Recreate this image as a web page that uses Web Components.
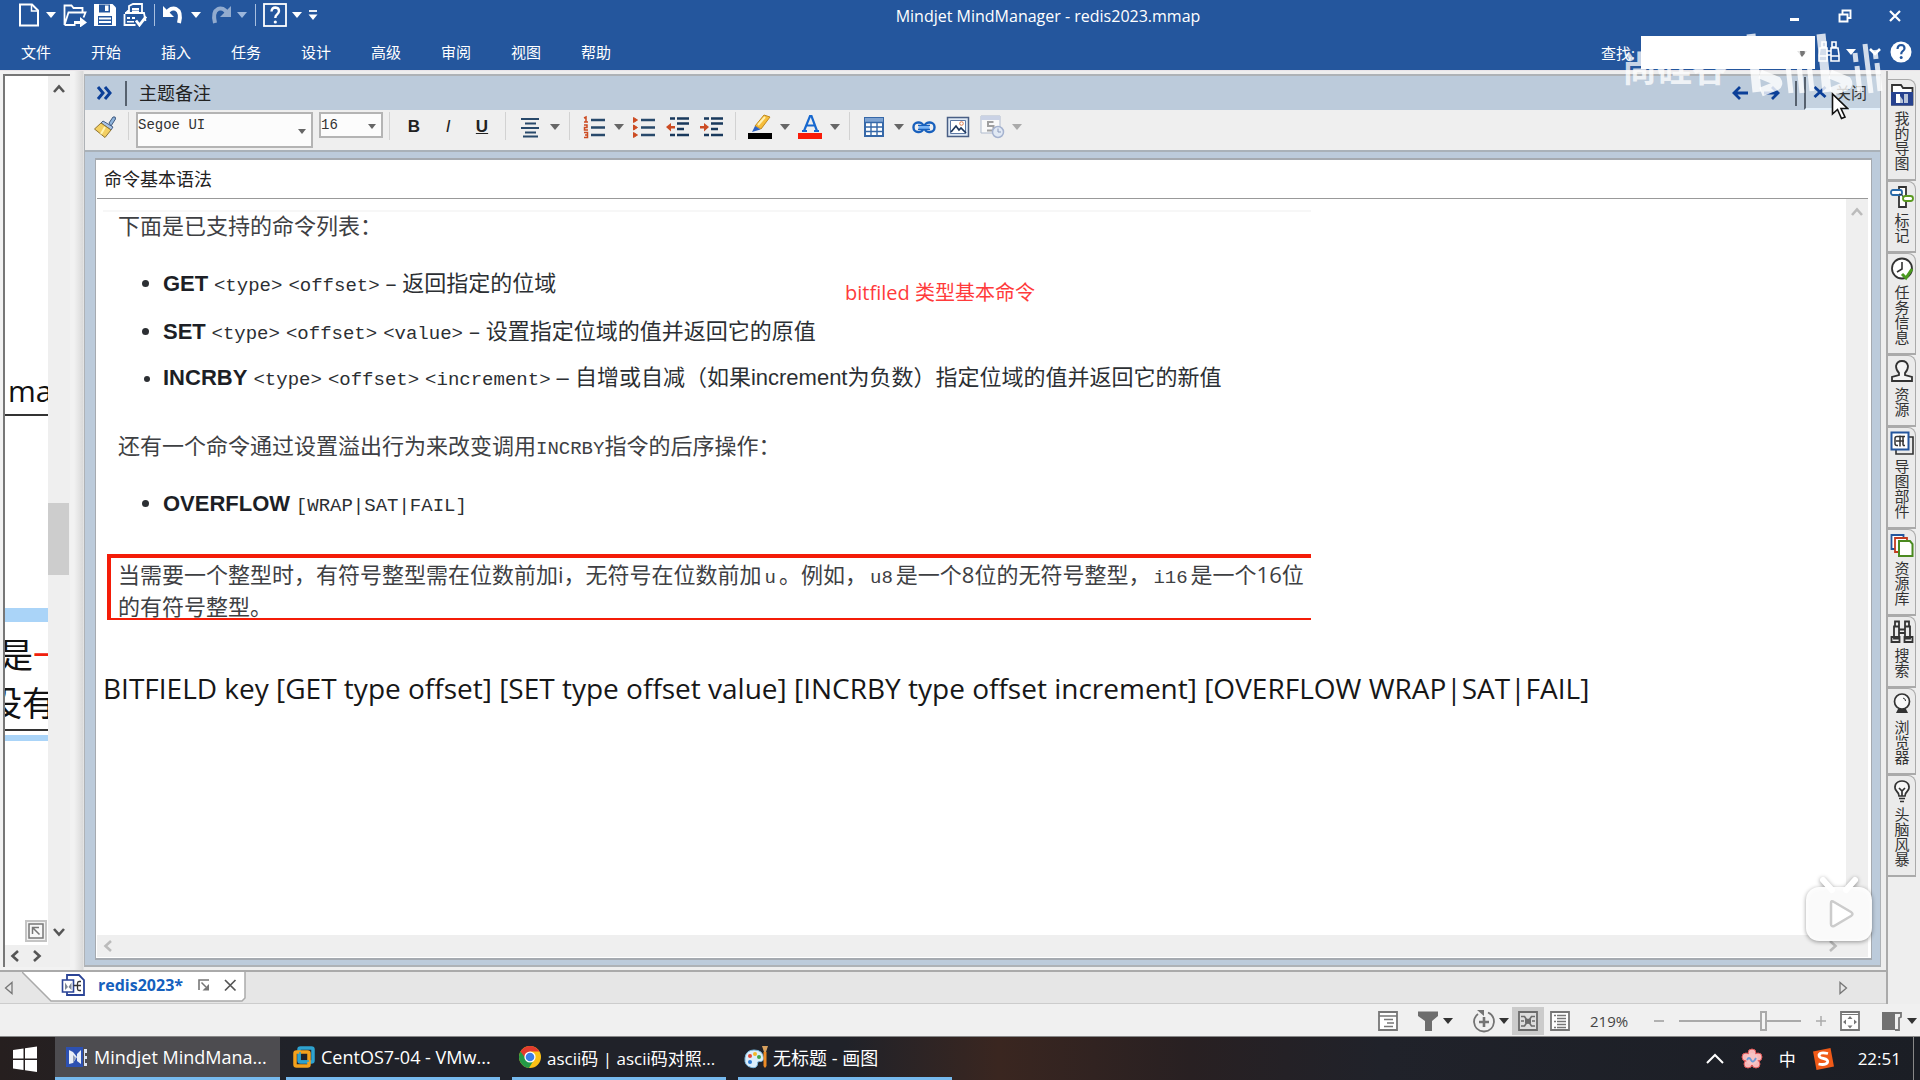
<!DOCTYPE html>
<html lang="zh-CN">
<head>
<meta charset="utf-8">
<title>Mindjet MindManager - redis2023.mmap</title>
<style>
  html, body { margin: 0; height: 100%; overflow: hidden; }
  body { font-family: "Open Sans", "Noto Sans CJK SC", sans-serif; font-size: 15px; color: #222; }
</style>
</head>
<body>
<mm-app></mm-app>
<script>
const ICONS = {
  newdoc: [24, '<path d="M3 1.5h12l6 6v15H3z" fill="none" stroke="#fff" stroke-width="2"/><path d="M14.5 1.5v6.500h6.500" fill="none" stroke="#fff" stroke-width="1.500"/>'],
  open: [24, '<path d="M1.500 22V2.500h7l2 2.500h9v4M1.500 22l4-12.500h17l-2 5M1.500 22h11" fill="none" stroke="#fff" stroke-width="1.800"/><path d="M11 18h6v-4l7 5.500-7 5v-3.500h-6z" fill="#fff"/>'],
  save: [24, '<path d="M1 1h18.500L23 4.500V23H1z" fill="#fff"/><path d="M6 1.500h11v8H6z" fill="#24569d"/><path d="M12 2.500h3.500v5.500H12z" fill="#fff"/><path d="M5 13h14v9H5z" fill="#24569d"/><path d="M6 15.500h12M6 19h12" stroke="#fff" stroke-width="2"/>'],
  print: [24, '<path d="M6 10V3l4-2h9v9M2 10h19l1.500 8M1.500 11v11h11M3 10l3-3M9 6h7M9 8.500h7" fill="none" stroke="#fff" stroke-width="1.800"/><path d="M4 14h3v2H4zM9 14h3v2H9zM4 18h7v1.500H4z" fill="#fff"/><path d="M13 17.500l3.500 4.500L23 13.500" fill="none" stroke="#fff" stroke-width="2.800"/>'],
  undo: [24, '<path d="M1 3v11h11z" fill="#fff"/><path d="M5 10C9 2 21 4 17 20" fill="none" stroke="#fff" stroke-width="4"/>'],
  redo: [24, '<g opacity=".5"><path d="M23 3v11H12z" fill="#fff"/><path d="M19 10C15 2 3 4 7 20" fill="none" stroke="#fff" stroke-width="4"/></g>'],
  helpbox: [24, '<rect x="1" y="1" width="22" height="22" fill="none" stroke="#fff" stroke-width="1.800"/><path d="M8.500 8.500q.3-4 4-4 3.500.2 3.500 3.500 0 2-2 3.500-1.700 1.200-1.700 3.500" fill="none" stroke="#fff" stroke-width="2.400"/><circle cx="12.300" cy="19" r="1.600" fill="#fff"/>'],
  custom: [12, '<path d="M2 2h8" stroke="#fff" stroke-width="1.800"/><path d="M1.500 5.500h9L6 11z" fill="#fff"/>'],
  min: [16, '<path d="M3 11.500h9" stroke="#fff" stroke-width="3"/>'],
  restore: [16, '<path d="M5.500 6V2.500h8V10H10M2.500 6.500h8v7h-8z" fill="none" stroke="#fff" stroke-width="1.900"/>'],
  close: [16, '<path d="M3 3l10 10M13 3L3 13" stroke="#fff" stroke-width="2.200"/>'],
  binw: [24, '<g fill="none" stroke="#fff" stroke-width="1.600"><path d="M5 2h4v5H5zM15 2h4v5h-4zM3 8h7v13H2v-6zM14 8h7l1 7v6h-8zM10 11h4M10 15h4M2 16h8M14 16h8"/></g>'],
  bin: [24, '<g fill="none" stroke="#333" stroke-width="1.800"><path d="M5 1.500h4v5H5zM15 1.500h4v5h-4zM4 6.500h5v12H4zM15 6.500h5v12h-5zM9 9.500h6M9 13h6M1.500 17h8v5h-8zM14.500 17h8v5h-8z"/></g>'],
  helpc: [24, '<circle cx="12" cy="12" r="10.500" fill="#fff"/><path d="M8.500 9q.3-4 3.700-4 3.300.2 3.300 3.200 0 1.800-1.800 3-1.500 1-1.500 3" fill="none" stroke="#24569d" stroke-width="2.200"/><circle cx="12.200" cy="17.500" r="1.500" fill="#24569d"/>'],
  chev: [16, '<path d="M3 5l5 5 5-5" fill="none" stroke="#fff" stroke-width="2.600"/>'],
  expand: [18, '<path d="M3 3l5 6-5 6M10 3l5 6-5 6" fill="none" stroke="#0b3f98" stroke-width="3"/>'],
  left: [18, '<path d="M17 9H3M9 3L3 9l6 6" fill="none" stroke="#0b3f98" stroke-width="2.800"/>'],
  right: [18, '<path d="M1 9h14M9 3l6 6-6 6" fill="none" stroke="#0b3f98" stroke-width="2.800"/>'],
  xblue: [16, '<path d="M2.500 3l11 10M13.500 3l-11 10" stroke="#0b3f98" stroke-width="2.900"/>'],
  brush: [24, '<path d="M16 8l4-6q3-1 2.500 2L18 11z" fill="#8eb4dc" stroke="#405a80"/><path d="M10 6l10 6-2 3L8 8z" fill="#a9c3e6" stroke="#465f86"/><path d="M8 8l10 7-6 7.500L1.500 14z" fill="#f3cf62" stroke="#8f7430"/><path d="M12 12l-4 7" stroke="#fff3b0" stroke-width="2"/>'],
  align: [24, '<path d="M3 4h18M7 8.500h11M3 13h18M7 17.500h11M5 21.500h15" stroke="#28496b" stroke-width="2.100"/>'],
  numlist: [24, '<path d="M9 5h14M9 12.500h14M9 20h14" stroke="#28496b" stroke-width="2.600"/><path d="M2 3l2-1v5M2 7h4M2 10h3v2.500H2.500V15H6M2 17.500h3.500v5H2M3 20h2" fill="none" stroke="#cc4b22" stroke-width="1.500"/>'],
  bullist: [24, '<path d="M9 5h14M9 12.500h14M9 20h14" stroke="#28496b" stroke-width="2.600"/><path d="M1.500 2.500l4 2.500-4 2.500zM1.500 10l4 2.500-4 2.500zM1.500 17.500l4 2.500-4 2.500z" fill="#cc4b22" stroke="#cc4b22"/>'],
  outdent: [24, '<path d="M4 3.500h5M11 3.500h12M11 8.500h12M11 14h7M4 20h5M11 20h12" stroke="#19395c" stroke-width="2.400"/><path d="M0 12l5-4v3h4v2.500H5v3z" fill="#cc4b22"/>'],
  indent: [24, '<path d="M4 3.500h5M11 3.500h12M11 8.500h12M11 14h7M4 20h5M11 20h12" stroke="#19395c" stroke-width="2.400"/><path d="M9 12L4 8v3H0v2.500h4v3z" fill="#cc4b22"/>'],
  highlight: [26, '<path d="M8 12L17 1l6 2-9 12z" fill="#f6bd3a" stroke="#c08a20"/><path d="M11 11l7-8" stroke="#fff0b0" stroke-width="2"/><path d="M8 12l5.500 3.500L5 18z" fill="#2b62c4"/><path d="M1 19h24v6H1z"/>'],
  fontcol: [26, '<path d="M7 17L13 2h1.500L20 17M9.500 11.500h8M5 17h5M17 17h5" fill="none" stroke="#1768cf" stroke-width="2.200"/><path d="M1 19h24v6H1z" fill="#f81b09"/>'],
  table: [22, '<path d="M2 2h18v18H2z" fill="#fff" stroke="#3668a8" stroke-width="2"/><path d="M2 2h18v4H2z" fill="#7ea3d2"/><path d="M2 6.500h18M2 11h18M2 15.500h18M8 6v14M14 6v14" stroke="#3668a8" stroke-width="1.400"/>'],
  link: [24, '<g fill="none" stroke="#1860bd" stroke-width="2.400"><rect x="1.500" y="7.500" width="10" height="9.500" rx="4.500"/><rect x="12.500" y="7.500" width="10" height="9.500" rx="4.500"/></g><path d="M6.500 12.300h11" stroke="#78b3f5" stroke-width="3.600"/><path d="M6 10.300h12M6 14.300h12" stroke="#1860bd" stroke-width="1.300"/>'],
  image: [24, '<path d="M1.500 2.500h21v19h-21z" fill="#dfe9f5" stroke="#4a5f85" stroke-width="1.500"/><path d="M4.500 5.500h15v13h-15z" fill="#fff" stroke="#5d79a5"/><path d="M5 17l5-6 3 4 2-2 5 5" fill="none" stroke="#1b355c" stroke-width="1.700"/><circle cx="15.500" cy="8.500" r="1.800" fill="#fff" stroke="#df7b4a"/>'],
  datetime: [26, '<g opacity=".65"><path d="M2 2h19v17H2z" fill="#fff" stroke="#8fa0bd"/><path d="M2 2h19v4H2z" fill="#b7c4e0"/><path d="M14.500 8H9v4h5.500v4.500H8" fill="none" stroke="#777" stroke-width="2"/><circle cx="19" cy="18" r="5.500" fill="#dbe6f8" stroke="#7e93be" stroke-width="1.500"/><path d="M19 14.500V18h3" fill="none" stroke="#566f9e"/></g>'],
  mymaps: [24, '<path d="M2 21.500V2h9l2 3h9.500v16.500z" fill="#fff" stroke="#333" stroke-width="1.800"/><path d="M1 9h22v13.500H1z" fill="#27428f"/><path d="M6 11h4v9H6z" fill="#fff"/><path d="M10 13l3 4v3h-3zM14 11h4v9h-4z" fill="#b9c4d8"/>'],
  marker: [24, '<path d="M9 2h7v20H9z" fill="#fff" stroke="#333" stroke-width="1.800"/><rect x="1" y="5" width="11" height="5" rx="2" fill="#fff" stroke="#2869a8" stroke-width="1.800"/><path d="M9 9q4 0 4 3" fill="none" stroke="#333"/><rect x="13" y="11" width="10" height="5" rx="2.500" fill="#fff" stroke="#5a9a20" stroke-width="1.800"/>'],
  task: [24, '<circle cx="12" cy="11.500" r="10" fill="#fff" stroke="#333" stroke-width="1.800"/><path d="M12 5v7l-5 3" fill="none" stroke="#333" stroke-width="1.600"/><path d="M12 17l4 4 6-9" fill="none" stroke="#4b9a20" stroke-width="3"/>'],
  person: [24, '<path d="M9 14q-3-3-3-7 1-5 6-5t6 5q0 4-3 7v2l7 2v4H2v-4l7-2z" fill="#f5f5f5" stroke="#333" stroke-width="1.800"/>'],
  parts: [24, '<path d="M19 6h4v17H6v-4" fill="none" stroke="#333" stroke-width="1.600"/><path d="M1.500 1.500h17v17h-17z" fill="#fff" stroke="#24569d" stroke-width="2"/><path d="M10 4.500v11M13 5.500H7q-2 0-2 2v5q0 2 2 2h1M13 14.500h2M6 10h8M13 5.500h2M13 5.500v9" fill="none" stroke="#333" stroke-width="1.500"/>'],
  library: [24, '<path d="M1.500 2h12v14h-12z" fill="#fff" stroke="#24569d" stroke-width="1.800"/><path d="M5 5h12v14H5z" fill="#fff" stroke="#c33c20" stroke-width="1.800"/><path d="M9 8h11l2.500 3v12H9z" fill="#fff" stroke="#4b8a20" stroke-width="2"/>'],
  globe: [24, '<circle cx="12" cy="9.500" r="7.500" fill="#f8f8f8" stroke="#333" stroke-width="1.700"/><path d="M13 6q3 1 2.500 3" fill="none" stroke="#333"/><path d="M8 17h8l2 4H6z" fill="#333"/>'],
  bulb: [24, '<path d="M9 17q-.3-3-2.500-5Q4 9 5.500 5.500 7.500 2 12 2t6.500 3.500Q20 9 17.500 12q-2.200 2-2.500 5z" fill="#f8f8f8" stroke="#333" stroke-width="1.700"/><path d="M9 9l3 3 3-3M12 11v6M9 19.500h6M10 22.500h4" fill="none" stroke="#333" stroke-width="1.700"/>'],
  mmdoc: [24, '<path d="M6 2h12l5 5v15H6z" fill="#fff" stroke="#2b4496" stroke-width="1.800"/><path d="M1.500 7h11v12h-11z" fill="#fff" stroke="#2b4496" stroke-width="1.600"/><path d="M4 9.500l3 4.500-3 3zM10.500 9.500L7.500 14l3 3z" fill="#7d8795"/><path d="M12.500 12.500h4M20 8.500h-2q-1.500 0-1.500 2v5q0 2 1.500 2h2M17 12.500h3" fill="none" stroke="#333" stroke-width="1.300"/>'],
  pin: [14, '<path d="M2 12V2h10" fill="none" stroke="#777" stroke-width="1.600"/><path d="M4.500 4.500L9 9" stroke="#777" stroke-width="1.500"/><path d="M12 6v6.500H5.500z" fill="#777"/>'],
  xgray: [14, '<path d="M2 2l10.500 10.500M12.500 2L2 12.500" stroke="#555" stroke-width="1.700"/>'],
  corner: [22, '<path d="M1 1h20v20H1z" fill="#f2f2f2" stroke="#c4c4c4" stroke-width="2"/><path d="M4 4h14v14H4z" fill="#f8f8f8" stroke="#777" stroke-width="1.500"/><path d="M7.500 14V7.500H14M8 8l6.500 6.500" fill="none" stroke="#777" stroke-width="1.500"/>'],
  tril: [14, '<path d="M11 1.500v11L4.500 7z" fill="none" stroke="#777" stroke-width="1.300"/>'],
  trir: [14, '<path d="M4 1.500v11L10.500 7z" fill="none" stroke="#777" stroke-width="1.300"/>'],
  cup: [14, '<path d="M2 10l5-5.500 5 5.500" fill="none" stroke="currentColor" stroke-width="2.600"/>'],
  cdown: [14, '<path d="M2 4l5 5.500L12 4" fill="none" stroke="currentColor" stroke-width="2.600"/>'],
  cleft: [14, '<path d="M10 2L4.500 7l5.500 5" fill="none" stroke="currentColor" stroke-width="2.600"/>'],
  cright: [14, '<path d="M4 2l5.500 5L4 12" fill="none" stroke="currentColor" stroke-width="2.600"/>'],
  note: [22, '<path d="M2 2h18v18H2z" fill="#fff" stroke="#777" stroke-width="1.800"/><path d="M2 6h18M7 9.500h9M10 13h7M7 16.500h9" stroke="#777" stroke-width="1.600"/>'],
  filter: [22, '<path d="M1 1.500h20V6l-6 5v10H8V11L1 6z" fill="#6d6d6d"/>'],
  addcircle: [24, '<path d="M6 5q-4 3-4 8 1 9 10 9.500 9-.5 10-9.500 0-7-6-9.500" fill="none" stroke="#737373" stroke-width="1.800"/><path d="M12 8v10M7 13h10" stroke="#737373" stroke-width="2.600"/><path d="M5 1h7v6z" fill="#737373"/>'],
  mapview: [22, '<path d="M2 2h18v18H2z" fill="#ddd" stroke="#6b6b6b" stroke-width="1.800"/><path d="M4 6.500h3.500l2 3h3l2-3H18M4 16h3.500l2-3h3l2 3H18M4 11h3M15 11h3" fill="none" stroke="#6b6b6b" stroke-width="1.600"/><path d="M8 9h6v4.500H8z" fill="#6b6b6b"/>'],
  outline: [22, '<path d="M2 2h18v18H2z" fill="#fff" stroke="#777" stroke-width="1.800"/><path d="M5 5.500h2M8 5.500h9M8 8.500h9M8 11.500h9M5 11.500h2M8 14.500h9M8 17.500h9M5 17.500h2" stroke="#777" stroke-width="1.400"/>'],
  fit: [22, '<path d="M2 2h18v18H2z" fill="#fff" stroke="#777" stroke-width="1.800"/><path d="M2 4.500h18" stroke="#777"/><path d="M11 6l2.500 3h-5zM11 18.500l2.500-3h-5zM4 12l3-2.500v5zM18 12l-3-2.500v5z" fill="#777"/>'],
  pane: [22, '<path d="M1 2h13v18H1z" fill="#717171"/><path d="M14 3h6v4l-2 1v12h-4" fill="none" stroke="#777" stroke-width="1.800"/>'],
  plus: [14, '<path d="M7 2v10M2 7h10" stroke="#aaa" stroke-width="1.500"/>'],
  minus: [14, '<path d="M2 7h10" stroke="#aaa" stroke-width="1.800"/>'],
  windows: [26, '<path d="M1 4l10.500-1.500v10H1zM13 2.300L25 .5v12H13zM1 14h10.500v10L1 22.500zM13 14h12v12l-12-1.800z" fill="#fff"/>'],
  mm: [24, '<path d="M1 2h17v20H1z" fill="#2d51b2"/><path d="M4 5l4 2 4 5-4 6-4 1zM16 5v14l-4-3V9z" fill="#e8edf6"/><path d="M8 10l3 3-3 5z" fill="#8d9bb8"/><path d="M19 4h3v4h-2v3h2v3h-2v4h2v3h-3z" fill="#dfe5f3"/>'],
  vm: [24, '<rect x="7" y="3" width="14" height="14" rx="1.500" fill="none" stroke="#2ea2cf" stroke-width="3.500"/><rect x="3" y="7" width="14" height="14" rx="1.500" fill="none" stroke="#f5a21c" stroke-width="3.500"/><path d="M8 7v9h9" fill="none" stroke="#2ea2cf" stroke-width="1.500"/>'],
  chrome: [24, '<circle cx="12" cy="12" r="11" fill="#fbc116"/><path d="M2.500 6.500A11 11 0 0 0 11 23l5.500-9L12 12z" fill="#249a47"/><path d="M2.500 6.500A11 11 0 0 1 21.500 6.500H12L8 14z" fill="#e33b2e"/><circle cx="12" cy="12" r="5.600" fill="#fff"/><circle cx="12" cy="12" r="4.300" fill="#3b7de8"/>'],
  paint: [24, '<path d="M10 5q9 0 9.500 8 0 4-4 3.500-3 0-2 3-1 4-6 3Q0 21 1 13 2 5 10 5z" fill="#dbeefb" stroke="#79b7dd"/><circle cx="6" cy="11" r="2" fill="#e04a38"/><circle cx="11" cy="9" r="2" fill="#f3b728"/><circle cx="15" cy="12" r="2" fill="#42a44a"/><circle cx="6" cy="17" r="2" fill="#2c7bd2"/><path d="M18 1h6l-2 6h-2z" fill="#d8a15e"/><path d="M19.500 7h3v14l-1.500 2-1.500-2z" fill="#ec8b25"/>'],
  trayup: [20, '<path d="M2 14l8-8 8 8" fill="none" stroke="#fff" stroke-width="2"/>'],
  flower: [24, '<g fill="#f7b9b9" stroke="#e05656"><circle cx="12" cy="6" r="4"/><circle cx="18" cy="10" r="4"/><circle cx="16" cy="17" r="4"/><circle cx="8" cy="17" r="4"/><circle cx="6" cy="10" r="4"/></g><circle cx="12" cy="12" r="6" fill="#f7c4c4"/><path d="M7 13q2-4 4 0t5-2" fill="none" stroke="#6d9bd6" stroke-width="1.800"/>'],
  sogou: [24, '<path d="M2 4.500L19.500 1 23 19.500 5.500 23z" fill="#f05a18"/><path d="M17 6.500q-8-2-9 1.500 0 3 4.500 3.500 5 .8 4 4-2 3-9 1.500" fill="none" stroke="#fff" stroke-width="2.800"/>']
};

const define = (tag, html, setup) => {
  const t = document.createElement('template');
  t.innerHTML = html;
  customElements.define(tag, class extends HTMLElement {
    constructor() {
      super();
      this.attachShadow({ mode: 'open' }).append(t.content.cloneNode(true));
    }
    connectedCallback() {
      if (setup && !this.ready) { this.ready = true; setup(this, this.shadowRoot); }
    }
  });
};

define('mm-icon', `<style>:host{display:inline-flex;flex:none}svg{display:block}</style>`, (el, root) => {
  const [size, body] = ICONS[el.getAttribute('name')];
  root.innerHTML += `<svg width="${size}" height="${size}" viewBox="0 0 ${size} ${size}" aria-hidden="true">${body}</svg>`;
});

define('mm-button', `<style>
  :host{display:inline-flex;flex:none;height:28px;align-items:stretch}
  button{appearance:none;border:0;background:none;padding:0;margin:0;color:inherit;font:inherit;display:flex;align-items:center;justify-content:center}
  .main{width:var(--button-width,28px)}
  .more{width:16px}
  .more i{border:5px solid transparent;border-top:6px solid var(--arrow,#fff);border-bottom:0}
</style><button class="main"><slot></slot></button>`, (el, root) => {
  root.querySelector('.main').setAttribute('aria-label', el.getAttribute('label') || '');
  if (el.hasAttribute('split')) {
    const b = document.createElement('button');
    b.className = 'more';
    b.setAttribute('aria-label', '更多');
    b.innerHTML = '<i></i>';
    root.append(b);
  }
});

define('mm-select', `<style>
  :host{display:block;position:relative;flex:none}
  select{appearance:none;box-sizing:border-box;width:100%;height:100%;margin:0;border:2px solid #b4b4b4;border-radius:0;background:#fcfcfc;color:#333;font:14px/18px "Liberation Mono",monospace;padding:0 20px var(--pad,0) 0}
  i{position:absolute;right:7px;top:calc(50% - 1px);border:4px solid transparent;border-top:5px solid #666;border-bottom:0;pointer-events:none}
</style><select><option></option></select><i></i>`, (el, root) => {
  root.querySelector('option').textContent = el.getAttribute('value');
  root.querySelector('select').setAttribute('aria-label', el.getAttribute('label'));
});

define('mm-titlebar', `<style>
  :host{display:block;background:#24569d;color:#fff;height:70px}
  .top{display:flex;align-items:center;height:32px}
  .quick{display:flex;align-items:center;gap:2px;padding:0 0 2px 15px}
  .sep{width:1px;height:22px;margin:0 3px;background:#a8bfdf}
  h1{flex:1;text-align:center;margin:0;padding-right:4px;font-size:16px;font-weight:400;line-height:32px}
  .win{display:flex;align-items:center;gap:22px;padding-right:11px}
  .row{display:flex;justify-content:space-between;height:38px;align-items:center;padding-top:2px;box-sizing:border-box}
  nav{display:flex;padding-left:21px;gap:40px}
  nav a{color:#fff;text-decoration:none;line-height:20px;width:30px;white-space:nowrap}
  .search{display:flex;align-items:center;padding-right:7px}
  .field{position:relative;margin-left:6px;display:flex}
  .field input{box-sizing:border-box;width:174px;height:33px;border:0;margin:0;background:#fff}
  .field i{position:absolute;right:8px;top:15px;border:5px solid transparent;border-top:6px solid #777;border-bottom:0}
  .dim{--arrow:#9db7dc}
  .tail{display:flex;gap:6px;align-items:center;padding-left:8px}
</style>
<div class="top">
  <div class="quick">
    <mm-button split label="新建"><mm-icon name="newdoc"></mm-icon></mm-button>
    <mm-button label="打开"><mm-icon name="open"></mm-icon></mm-button>
    <mm-button label="保存"><mm-icon name="save"></mm-icon></mm-button>
    <mm-button label="打印"><mm-icon name="print"></mm-icon></mm-button>
    <span class="sep"></span>
    <mm-button split label="撤销"><mm-icon name="undo"></mm-icon></mm-button>
    <mm-button split class="dim" label="重做"><mm-icon name="redo"></mm-icon></mm-button>
    <span class="sep"></span>
    <mm-button split label="帮助"><mm-icon name="helpbox"></mm-icon></mm-button>
    <mm-icon name="custom"></mm-icon>
  </div>
  <h1>Mindjet MindManager - redis2023.mmap</h1>
  <div class="win">
    <mm-button label="最小化"><mm-icon name="min"></mm-icon></mm-button>
    <mm-button label="还原"><mm-icon name="restore"></mm-icon></mm-button>
    <mm-button label="关闭窗口"><mm-icon name="close"></mm-icon></mm-button>
  </div>
</div>
<div class="row">
  <nav><a href="#">文件</a><a href="#">开始</a><a href="#">插入</a><a href="#">任务</a><a href="#">设计</a><a href="#">高级</a><a href="#">审阅</a><a href="#">视图</a><a href="#">帮助</a></nav>
  <div class="search"><label for="find">查找:</label><span class="field"><input id="find" type="text"><i></i></span>
    <mm-button split label="查找"><mm-icon name="binw"></mm-icon></mm-button>
    <div class="tail"><mm-icon name="chev"></mm-icon><mm-icon name="helpc"></mm-icon></div>
  </div>
</div>`);

define('mm-canvas', `<style>
  :host{display:grid;grid-template:1fr 22px/1fr 22px;width:67px;flex:none;box-sizing:border-box;border:2px solid #777;border-width:2px 0 0 2px;margin:3px 4px 3px 3px;background:#efefef;color:#555}
  .map{position:relative;overflow:hidden;background:#fff;color:#111}
  .map>*{position:absolute}
  .t{white-space:nowrap}
  .v{display:flex;flex-direction:column;align-items:center;justify-content:space-between;padding:6px 0;position:relative}
  .thumb{position:absolute;top:427px;left:0;right:1px;height:72px;background:#cdcdcd}
  .h{display:flex;align-items:center;gap:8px;padding-left:3px}
</style>
<div class="map">
  <span class="t" style="left:3px;top:295px;font-size:30px;line-height:40px">ma</span>
  <span style="left:0;right:0;top:338px;height:2px;background:#333"></span>
  <span style="left:0;right:0;top:532px;height:14px;background:#aad4f8"></span>
  <span class="t" style="left:-6px;top:555px;font-size:34px;line-height:48px">是<b style="color:#f0200c;font-weight:400">一</b></span>
  <span class="t" style="left:-17px;top:603px;font-size:34px;line-height:48px">没有</span>
  <span style="left:0;right:0;top:653px;height:2px;background:#333"></span>
  <span style="left:0;right:0;top:659px;height:6px;background:#aad4f8"></span>
  <mm-icon name="corner" style="right:1px;bottom:3px"></mm-icon>
</div>
<div class="v"><mm-icon name="cup"></mm-icon><span class="thumb"></span><mm-icon name="cdown"></mm-icon></div>
<div class="h"><mm-icon name="cleft"></mm-icon><mm-icon name="cright"></mm-icon></div>`);

define('mm-toolbar', `<style>
  :host{display:flex;align-items:flex-start;height:42px;box-sizing:border-box;padding:2px 0 0 3px;background:#efefef;border-bottom:2px solid #a9b1b8;--button-width:34px;--arrow:#666}
  mm-button{height:30px}
  .sep{width:1px;height:28px;margin:0 7px 0 6px;background:#d2d2d2}
  b,i,u{font:700 17px/22px "Liberation Sans",Arial,sans-serif;color:#222}
  i{font-style:italic;font-weight:400}
  .size{margin-left:6px}
  .off{--arrow:#aaa}
</style>
<mm-button label="格式刷"><mm-icon name="brush"></mm-icon></mm-button><span class="sep"></span>
<mm-select label="字体" value="Segoe UI" style="width:177px;height:36px;--pad:10px"></mm-select>
<mm-select class="size" label="字号" value="16" style="width:64px;height:26px"></mm-select><span class="sep"></span>
<mm-button label="粗体"><b>B</b></mm-button><mm-button label="斜体"><i>I</i></mm-button><mm-button label="下划线"><u>U</u></mm-button><span class="sep"></span>
<mm-button split label="对齐"><mm-icon name="align"></mm-icon></mm-button><span class="sep"></span>
<mm-button split label="编号"><mm-icon name="numlist"></mm-icon></mm-button><mm-button label="项目符号"><mm-icon name="bullist"></mm-icon></mm-button><mm-button label="减少缩进"><mm-icon name="outdent"></mm-icon></mm-button><mm-button label="增加缩进"><mm-icon name="indent"></mm-icon></mm-button><span class="sep"></span>
<mm-button split label="突出显示"><mm-icon name="highlight"></mm-icon></mm-button><mm-button split label="字体颜色"><mm-icon name="fontcol"></mm-icon></mm-button><span class="sep"></span>
<mm-button split label="表格"><mm-icon name="table"></mm-icon></mm-button><mm-button label="链接"><mm-icon name="link"></mm-icon></mm-button><mm-button label="图像"><mm-icon name="image"></mm-icon></mm-button><mm-button split class="off" label="日期"><mm-icon name="datetime"></mm-icon></mm-button>`);

define('mm-note', `<style>
  :host{display:grid;grid-template:auto 1fr 22px/1fr 22px;background:#fff;border:2px solid #a5aab0;border-width:2px 1px 2px 1px;padding:0 3px 1px 1px;color:#bbb}
  h3{grid-column:1/3;margin:0;padding:0 7px;font-size:18px;font-weight:400;line-height:38px;color:#222;border-bottom:1px solid #999}
  .doc{color:#3e4043;padding:11px 0 0 6px;font-size:22px;line-height:32px;overflow:hidden;min-height:0}
  .shot{position:relative;width:1208px;border-top:2px solid #f7f7f7}
  p{margin:0;padding-left:15px;line-height:26px}
  ul{margin:28px 0 38px;padding:0 0 0 60px;display:flex;flex-direction:column;gap:14px;color:#2c2f33}
  ul.one{margin-bottom:34px}
  li{white-space:pre}
  li::marker{font-size:20px}
  li b{font-family:"Liberation Sans",Arial,sans-serif;color:#1d1f26}
  code{font:19px/0 "Liberation Mono",monospace;margin-right:6px}
  p code{margin:0}
  .box code{margin:0 3px}
  .mid{font-family:"Liberation Sans","Noto Sans CJK SC",sans-serif}
  .box{border:4px solid #f41c08;border-width:4px 0 2px 4px;margin-left:4px;padding-left:7px;height:60px;white-space:nowrap}
  .tag{position:absolute;left:742px;top:66px;font-size:20px;line-height:30px;color:#ff3b3b}
  .cmd{padding-left:0;margin:49px 0 0;font-size:28px;line-height:38px;color:#171717}
  .v{background:#efefef;display:flex;justify-content:center;padding-top:6px}
  .h{grid-column:1/3;background:#efefef;display:flex;justify-content:space-between;align-items:center;padding:0 28px 0 4px}
</style>
<h3>命令基本语法</h3>
<div class="doc">
  <div class="shot">
    <p>下面是已支持的命令列表：</p>
    <ul>
      <li><b>GET</b> <code>&lt;type&gt;</code><code>&lt;offset&gt;</code>– 返回指定的位域</li>
      <li><b>SET</b> <code>&lt;type&gt;</code><code>&lt;offset&gt;</code><code>&lt;value&gt;</code>– 设置指定位域的值并返回它的原值</li>
      <li class="mid"><b>INCRBY</b> <code>&lt;type&gt;</code><code>&lt;offset&gt;</code><code>&lt;increment&gt;</code>– 自增或自减（如果increment为负数）指定位域的值并返回它的新值</li>
    </ul>
    <p>还有一个命令通过设置溢出行为来改变调用<code>INCRBY</code>指令的后序操作：</p>
    <ul class="one"><li><b>OVERFLOW</b> <code>[WRAP|SAT|FAIL]</code></li></ul>
    <div class="box">当需要一个整型时，有符号整型需在位数前加i，无符号在位数前加<code>u</code>。例如，<code>u8</code>是一个8位的无符号整型，<code>i16</code>是一个16位<br>的有符号整型。</div>
    <span class="tag">bitfiled 类型基本命令</span>
  </div>
  <p class="cmd">BITFIELD key [GET type offset] [SET type offset value] [INCRBY type offset increment] [OVERFLOW WRAP|SAT|FAIL]</p>
</div>
<div class="v"><mm-icon name="cup"></mm-icon></div>
<div class="h"><mm-icon name="cleft"></mm-icon><mm-icon name="cright"></mm-icon></div>`);

define('mm-notes-panel', `<style>
  :host{display:flex;flex-direction:column;flex:1;min-width:0;margin:3px 5px 3px 10px;background:#bccbdb;border:2px solid #aeb2b6;border-width:2px 1px 2px 1px}
  header{display:flex;justify-content:space-between;align-items:center;height:34px;padding-left:10px}
  .l,.r{display:flex;align-items:center}
  .l{gap:12px}
  .bar{width:2px;height:25px;background:#56616e}
  h2{margin:0;font-size:18px;font-weight:400;line-height:32px}
  .r{gap:14px}
  .r .bar{margin-right:-7px}
  button{display:flex;align-items:center;gap:7px;box-sizing:border-box;height:33px;width:76px;padding:0 0 0 6px;border:0;border-bottom:2px solid #e6f2fc;border-left:2px solid #56616e;background:#c4d2e0;color:#333;font:inherit;font-size:16px;white-space:nowrap}
  mm-note{flex:1;min-height:0;margin:6px 8px 5px 10px}
</style>
<header><div class="l"><mm-icon name="expand"></mm-icon><span class="bar"></span><h2>主题备注</h2></div>
<div class="r"><mm-icon name="left"></mm-icon><mm-icon name="right"></mm-icon><span class="bar"></span><button><mm-icon name="xblue"></mm-icon>关闭</button></div></header>
<mm-toolbar></mm-toolbar><mm-note></mm-note>`);

define('mm-side-tab', `<style>
  :host{display:block}
  button{appearance:none;box-sizing:border-box;width:28px;height:var(--h);display:flex;flex-direction:column;align-items:center;gap:4px;margin:0;padding:3px 0 0;border:1px solid #aaa;border-left:0;border-bottom-width:2px;border-radius:0 8px 0 0;background:#ebebeb;color:#333;font:15px/16px "Noto Sans CJK SC",sans-serif}
  span{writing-mode:vertical-rl;text-orientation:upright;white-space:nowrap;line-height:20px}
</style><button><span><slot></slot></span></button>`, (el, root) => {
  const icon = document.createElement('mm-icon');
  icon.setAttribute('name', el.getAttribute('icon'));
  root.querySelector('button').prepend(icon);
});

define('mm-sidebar', `<style>
  :host{display:block;flex:none;width:34px;background:#eee;border-left:2px solid #aaa;padding-top:8px;box-sizing:border-box}
  .two{--h:72px}.three{--h:87px}.four{--h:102px}
</style>
<mm-side-tab class="four" icon="mymaps">我的导图</mm-side-tab>
<mm-side-tab class="two" icon="marker">标记</mm-side-tab>
<mm-side-tab class="four" icon="task">任务信息</mm-side-tab>
<mm-side-tab class="two" icon="person">资源</mm-side-tab>
<mm-side-tab class="four" icon="parts">导图部件</mm-side-tab>
<mm-side-tab class="three" icon="library">资源库</mm-side-tab>
<mm-side-tab class="two" icon="bin">搜索</mm-side-tab>
<mm-side-tab class="three" icon="globe">浏览器</mm-side-tab>
<mm-side-tab class="four" icon="bulb">头脑风暴</mm-side-tab>`);

define('mm-doc-tabs', `<style>
  :host{display:flex;height:34px;box-sizing:border-box;background:#e6e6e6;border-top:2px solid #aaa;border-bottom:1px solid #ccc;justify-content:space-between;align-items:center}
  .l{display:flex;align-items:flex-start;height:100%}
  .scroll{display:flex;padding:9px 0 0 1px}
  .tab{position:relative;margin-left:7px;width:224px;height:30px}
  .tab>svg{position:absolute;inset:0 auto auto 0}
  .in{position:relative;display:flex;align-items:center;height:26px;padding-left:39px}
  a{color:#1560bd;font-weight:700;font-size:16px;text-decoration:none;margin:0 14px 0 13px}
  .in mm-icon+mm-icon{margin-left:12px}
  .end{margin-right:36px}
</style>
<div class="l"><span class="scroll"><mm-icon name="tril"></mm-icon></span>
<div class="tab"><svg width="224" height="30" viewBox="0 0 224 30"><path d="M0 0l29 29h191l3-3V0" fill="#fff" stroke="#aaa" stroke-width="1.500"/></svg>
<div class="in"><mm-icon name="mmdoc"></mm-icon><a href="#">redis2023*</a><mm-icon name="pin"></mm-icon><mm-icon name="xgray"></mm-icon></div></div></div>
<mm-icon class="end" name="trir"></mm-icon>`);

define('mm-statusbar', `<style>
  :host{display:flex;align-items:center;justify-content:flex-end;height:33px;padding-top:2px;background:#f0f0f0;--arrow:#333;--button-width:24px;color:#444;border-bottom:1px solid #888;box-sizing:border-box}
  .views,.gap{display:flex;align-items:center}
  .gap{gap:16px}
  .view{--button-width:32px}
  .on{background:#cbcbcb}
  output{font-size:15px;width:50px;margin-left:14px}
  .zoom{display:flex;align-items:center;gap:10px;margin:0 10px 0 12px}
  input{appearance:none;width:122px;height:20px;margin:0 3px;background:linear-gradient(#aaa,#aaa) center/100% 2px no-repeat}
  input::-webkit-slider-thumb{appearance:none;width:7px;height:20px;border:2px solid #aaa;background:#f5f5f5;box-sizing:border-box}
  .last{margin-left:18px}
</style>
<div class="views"><div class="gap"><mm-button label="备注"><mm-icon name="note"></mm-icon></mm-button><mm-button split label="筛选"><mm-icon name="filter"></mm-icon></mm-button><mm-button split label="缩放"><mm-icon name="addcircle"></mm-icon></mm-button></div>
<mm-button class="view on" label="导图"><mm-icon name="mapview"></mm-icon></mm-button><mm-button class="view" label="大纲"><mm-icon name="outline"></mm-icon></mm-button></div>
<output>219%</output>
<div class="zoom"><mm-icon name="minus"></mm-icon><input type="range" min="0" max="100" value="70" aria-label="缩放比例"><mm-icon name="plus"></mm-icon></div>
<mm-button label="适应"><mm-icon name="fit"></mm-icon></mm-button>
<mm-button split class="last" label="任务窗格"><mm-icon name="pane"></mm-icon></mm-button>`);

define('mm-task', `<style>
  :host{display:block;flex:none}
  button{box-sizing:border-box;width:var(--w,214px);height:43px;display:flex;align-items:center;gap:5px;margin:0;padding:0 0 0 var(--pad,6px);border:0;border-bottom:3px solid #76b9ed;background:var(--bg,none);color:#fff;font:inherit;font-size:var(--size,18px);white-space:nowrap}
</style><button><slot name="icon"></slot><slot></slot></button>`);

define('mm-taskbar', `<style>
  :host{display:flex;justify-content:space-between;height:43px;background:linear-gradient(90deg,#261f1f 0,#202229 15%,#202229 44%,#3a2620 52%,#282022 62%,#20222a 72%,#1b1e25);color:#fff}
  .l,.r{display:flex;align-items:center}
  .start{width:55px;border:0;background:none;padding:0 0 0 12px;display:flex}
  .tasks{display:flex;gap:12px}
  .on{--w:225px;--bg:#4d4c50;--pad:10px;margin-right:-6px}
  .mixed{--size:17px}
  .r{gap:15px;font-size:17px;padding-right:6px}
  time{border-right:1px solid #888;padding:0 12px 0 8px;line-height:43px}
</style>
<div class="l"><button class="start" aria-label="开始"><mm-icon name="windows"></mm-icon></button><div class="tasks">
<mm-task class="on"><mm-icon slot="icon" name="mm"></mm-icon>Mindjet MindMana...</mm-task>
<mm-task><mm-icon slot="icon" name="vm"></mm-icon>CentOS7-04 - VMw...</mm-task>
<mm-task class="mixed"><mm-icon slot="icon" name="chrome"></mm-icon>ascii码 | ascii码对照...</mm-task>
<mm-task><mm-icon slot="icon" name="paint"></mm-icon>无标题 - 画图</mm-task></div></div>
<div class="r"><mm-icon name="trayup"></mm-icon><mm-icon name="flower"></mm-icon><span>中</span><mm-icon name="sogou"></mm-icon><time>22:51</time></div>`);

define('mm-overlay', `<style>
  :host{position:absolute;inset:0;pointer-events:none}
  .name{position:absolute;right:193px;top:44px;font-size:35px;line-height:50px;font-weight:600;color:rgba(255,255,255,.75)}
  .logo{position:absolute;right:35px;top:30px}
  .cursor{position:absolute;right:71px;top:92px}
  .tv{position:absolute;right:45px;bottom:136px;filter:drop-shadow(0 1px 2px #0006)}
</style>
<span class="name">尚硅谷</span>
<svg class="logo" width="142" height="68" viewBox="0 0 142 68" fill="none" stroke="#fff" stroke-opacity=".8">
  <path d="M8 4l6 58M78 4l6 58" stroke-width="9"/>
  <path d="M17 44l17 7q2 3-1 5l-15 6M87 44l17 7q2 3-1 5l-15 6" stroke-width="9"/>
  <path d="M45 36l3 27M54 16l5 47M66 33l3 28M114 36l3 27M122 14l6 49M134 33l3 28" stroke-width="5"/>
  <path d="M43 23l1 9M64 20l1 9M112 23l1 9M132 20l1 9" stroke-width="5"/>
</svg>
<svg class="cursor" width="18" height="28" viewBox="0 0 18 28"><path d="M1.500 2v20l5-4.500 4 9 3.500-1.500-4-8.500h6.500z" fill="#fff" stroke="#111" stroke-width="1.600"/></svg>
<svg class="tv" width="72" height="68" viewBox="0 0 72 68"><path d="M20 4l9 10M52 4l-9 10" stroke="#fff" stroke-width="6" stroke-linecap="round"/><rect x="3" y="11" width="66" height="54" rx="13" fill="#fff" fill-opacity=".95"/><path d="M28 27v21q0 3 3 2l17-10q3-2 0-4L31 26q-3-2-3 1z" fill="#fff" stroke="#ccc" stroke-width="2.500"/></svg>`);

define('mm-app', `<style>
  :host{display:flex;flex-direction:column;height:100vh;position:relative;overflow:hidden;background:#eee}
  .body{display:flex;flex:1;min-height:0;border-top:1px solid #e8e4e8}
  .main{display:flex;flex-direction:column;flex:1;min-width:0}
  .work{display:flex;flex:1;min-height:0;background:linear-gradient(90deg,#f2f2f2 74px,#d9d9d9 83px,#eee 84px)}
</style>
<mm-titlebar></mm-titlebar>
<div class="body"><div class="main"><div class="work"><mm-canvas></mm-canvas><mm-notes-panel></mm-notes-panel></div><mm-doc-tabs></mm-doc-tabs></div><mm-sidebar></mm-sidebar></div>
<mm-statusbar></mm-statusbar><mm-taskbar></mm-taskbar><mm-overlay></mm-overlay>`);
</script>
</body>
</html>
